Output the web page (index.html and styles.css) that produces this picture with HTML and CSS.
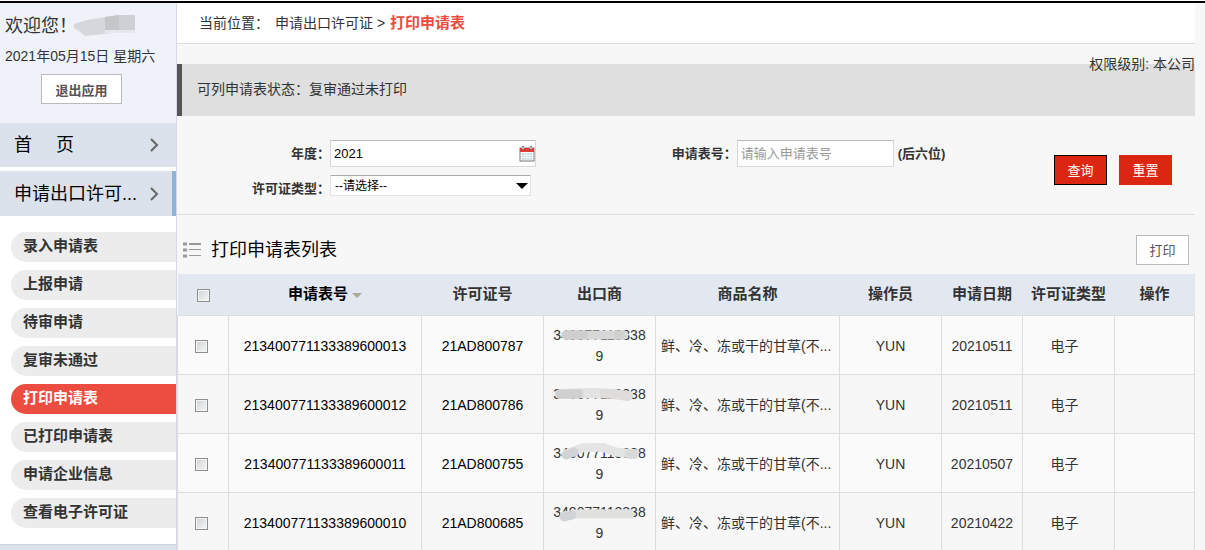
FILE: index.html
```
<!DOCTYPE html>
<html lang="zh-CN">
<head>
    <meta charset="UTF-8">
    <meta name="viewport" content="width=device-width, initial-scale=1.0">
    <title>打印申请表</title>
    <link rel="stylesheet" href="styles.css">
</head>
<body>
    <div class="layout">
        <aside class="sidebar">
            <div class="user">
                <div class="welcome">
                    <span>欢迎您！</span>
                    <svg class="mask" width="64" height="24" viewBox="0 0 64 24">
                        <path d="M1 10L14 6L32 3L46 1H62V16L48 16L40 19L12 22L6 17L1 14Z" fill="#d4d8dd"/>
                        <path d="M32 3L46 1V16H32Z" fill="#c4c7ca"/>
                        <path d="M46 1H62V16H46Z" fill="#cdd0d5"/>
                        <path d="M32 16H62V19H32Z" fill="#e4e8ed"/>
                    </svg>
                </div>
                <div class="date">2021年05月15日 星期六</div>
                <button class="btn btn-exit" type="button">退出应用</button>
            </div>
            <nav class="menu">
                <a class="menu-item" href="#">
                    <span class="menu-home"><span>首</span><span>页</span></span>
                    <svg class="chevron" width="10" height="14" viewBox="0 0 10 14"><path d="M2 1L8 7L2 13"/></svg>
                </a>
                <a class="menu-item current" href="#">
                    <span>申请出口许可...</span>
                    <svg class="chevron" width="10" height="14" viewBox="0 0 10 14"><path d="M2 1L8 7L2 13"/></svg>
                </a>
                <ul class="submenu">
                    <li><a href="#">录入申请表</a></li>
                    <li><a href="#">上报申请</a></li>
                    <li><a href="#">待审申请</a></li>
                    <li><a href="#">复审未通过</a></li>
                    <li><a class="active" href="#">打印申请表</a></li>
                    <li><a href="#">已打印申请表</a></li>
                    <li><a href="#">申请企业信息</a></li>
                    <li><a href="#">查看电子许可证</a></li>
                </ul>
            </nav>
            <div class="sidebar-rest"></div>
        </aside>

        <main class="main">
            <div class="breadcrumb">
                <span class="where">当前位置：</span>
                <span>申请出口许可证 &gt;</span>
                <strong>打印申请表</strong>
            </div>

            <div class="notice">
                可列申请表状态：复审通过未打印
                <span class="level">权限级别: 本公司</span>
            </div>

            <form class="search">
                <label for="year">年度：</label>
                <div class="field">
                    <div class="year-box">
                        <input id="year" type="text" value="2021">
                        <svg class="calendar" width="16" height="16" viewBox="0 0 16 16">
                            <rect x="1" y="2" width="14" height="13" fill="#fff" stroke="#777"/>
                            <rect x="1" y="2" width="14" height="4" fill="#e23a35"/>
                            <path d="M4 0V4M12 0V4" stroke="#777" stroke-width="2"/>
                            <path d="M4 1V3M12 1V3" stroke="#fff"/>
                            <rect x="3" y="7" width="10" height="7" fill="#c6d9da"/>
                            <path d="M3 9.500H13M3 11.500H13M5.500 7V14M8 7V14M10.500 7V14" stroke="#f4fafa"/>
                        </svg>
                    </div>
                </div>
                <label for="formNo">申请表号：</label>
                <div class="field">
                    <input id="formNo" class="form-no" type="text" placeholder="请输入申请表号">
                    <span class="hint">(后六位)</span>
                </div>
                <label for="type">许可证类型：</label>
                <div class="field select-field">
                    <div class="select-box">
                        <select id="type">
                            <option>--请选择--</option>
                        </select>
                        <svg class="arrow" width="12" height="6" viewBox="0 0 12 6"><path d="M0 0H12L6 6Z"/></svg>
                    </div>
                </div>
                <div class="search-actions">
                    <button class="btn-red focused" type="button">查询</button>
                    <button class="btn-red" type="button">重置</button>
                </div>
            </form>

            <div class="list-head">
                <svg class="list-icon" width="18" height="16" viewBox="0 0 18 16">
                    <path d="M0 2H4M0 8H4M0 14H4" stroke="#999" stroke-width="3"/>
                    <path d="M6 2H18" stroke="#999" stroke-width="2"/>
                    <path d="M6 7.500H18M6 13.500H18" stroke="#999"/>
                </svg>
                <h2>打印申请表列表</h2>
                <button class="btn btn-print" type="button">打印</button>
            </div>

            <table class="list">
                <colgroup>
                    <col class="c-check">
                    <col class="c-no">
                    <col class="c-license">
                    <col class="c-exporter">
                    <col>
                    <col class="c-operator">
                    <col class="c-date">
                    <col class="c-type">
                    <col class="c-action">
                </colgroup>
                <thead>
                    <tr>
                        <th><input type="checkbox" aria-label="全选"></th>
                        <th class="sorted">申请表号<svg class="sort" width="10" height="5" viewBox="0 0 10 5"><path d="M0 0H10L5 5Z"/></svg></th>
                        <th>许可证号</th>
                        <th>出口商</th>
                        <th>商品名称</th>
                        <th>操作员</th>
                        <th>申请日期</th>
                        <th>许可证类型</th>
                        <th>操作</th>
                    </tr>
                </thead>
                <tbody>
                    <tr>
                        <td class="check"><input type="checkbox" aria-label="选择 213400771133389600013"></td>
                        <td><a href="#">213400771133389600013</a></td>
                        <td><a href="#">21AD800787</a></td>
                        <td class="exporter">
                            340077113338<br>9
                            <svg class="smudge" width="96" height="24" viewBox="0 0 96 24">
                                <path d="M14 10H72" stroke="#d8d8d8" stroke-width="9" stroke-linecap="round"/>
                                <path d="M14 10H32" stroke="#cecfd1" stroke-width="9" stroke-linecap="round"/>
                                <path d="M62 10H73" stroke="#d3d1cf" stroke-width="9"/>
                            </svg>
                        </td>
                        <td class="goods">鲜、冷、冻或干的甘草(不...</td>
                        <td>YUN</td>
                        <td>20210511</td>
                        <td class="type">电子</td>
                        <td></td>
                    </tr>
                    <tr>
                        <td class="check"><input type="checkbox" aria-label="选择 213400771133389600012"></td>
                        <td><a href="#">213400771133389600012</a></td>
                        <td><a href="#">21AD800786</a></td>
                        <td class="exporter">
                            340077113338<br>9
                            <svg class="smudge" width="96" height="24" viewBox="0 0 96 24">
                                <path d="M8 10L40 9L62 10L76 12" fill="none" stroke="#dedddc" stroke-width="10" stroke-linecap="round"/>
                                <path d="M8 10H26" stroke="#cfcfcf" stroke-width="9" stroke-linecap="round"/>
                                <path d="M32 9H48" stroke="#e3e3e3" stroke-width="10"/>
                            </svg>
                        </td>
                        <td class="goods">鲜、冷、冻或干的甘草(不...</td>
                        <td>YUN</td>
                        <td>20210511</td>
                        <td class="type">电子</td>
                        <td></td>
                    </tr>
                    <tr>
                        <td class="check"><input type="checkbox" aria-label="选择 213400771133389600011"></td>
                        <td><a href="#">213400771133389600011</a></td>
                        <td><a href="#">21AD800755</a></td>
                        <td class="exporter">
                            340077113338<br>9
                            <svg class="smudge" width="96" height="24" viewBox="0 0 96 24">
                                <path d="M14 11L30 5L50 4L64 9L82 11" fill="none" stroke="#e3e4e4" stroke-width="9" stroke-linecap="round"/>
                                <path d="M14 12L22 9" stroke="#d2d3d5" stroke-width="9" stroke-linecap="round"/>
                                <path d="M78 11H82" stroke="#d8dada" stroke-width="10" stroke-linecap="round"/>
                            </svg>
                        </td>
                        <td class="goods">鲜、冷、冻或干的甘草(不...</td>
                        <td>YUN</td>
                        <td>20210507</td>
                        <td class="type">电子</td>
                        <td></td>
                    </tr>
                    <tr>
                        <td class="check"><input type="checkbox" aria-label="选择 213400771133389600010"></td>
                        <td><a href="#">213400771133389600010</a></td>
                        <td><a href="#">21AD800685</a></td>
                        <td class="exporter">
                            340077113338<br>9
                            <svg class="smudge" width="96" height="24" viewBox="0 0 96 24">
                                <path d="M12 14L24 12H78" fill="none" stroke="#e0e0df" stroke-width="9" stroke-linecap="round"/>
                                <path d="M12 15L20 13" stroke="#d2d3d5" stroke-width="9" stroke-linecap="round"/>
                            </svg>
                        </td>
                        <td class="goods">鲜、冷、冻或干的甘草(不...</td>
                        <td>YUN</td>
                        <td>20210422</td>
                        <td class="type">电子</td>
                        <td></td>
                    </tr>
                </tbody>
            </table>
        </main>
    </div>
</body>
</html>
```
FILE: styles.css
```
* {
    margin: 0;
    padding: 0;
    box-sizing: border-box;
}

html {
    scrollbar-width: none;
    background: #f7f7f7;
}

body {
    border-top: 1px solid #fff;
    color: #333;
    font-family: "Liberation Sans", "Noto Sans CJK SC", sans-serif;
    font-size: 14px;
    line-height: 20px;
}

a {
    color: inherit;
    text-decoration: none;
}

button,
input,
select {
    font-family: inherit;
    font-size: 13px;
}

.layout {
    display: flex;
    min-height: 100vh;
    border-top: 2px solid #000;
}

/* sidebar */
.sidebar {
    width: 177px;
    flex-shrink: 0;
    display: flex;
    flex-direction: column;
    background: #fff;
    border-right: 1px solid #d3d9e6;
}

.user {
    height: 120px;
    padding: 11px 5px;
    background: #eff3f9;
}

.welcome {
    display: flex;
    align-items: center;
    height: 24px;
    font-size: 18px;
}

.welcome span {
    width: 68px;
    white-space: nowrap;
}

.mask {
    flex-shrink: 0;
}

.date {
    margin-top: 8px;
    white-space: nowrap;
}

.btn {
    height: 30px;
    background: #fff;
    border: 1px solid #bbb;
    color: #555;
}

.btn-exit {
    display: block;
    width: 81px;
    margin: 8px 0 0 36px;
    font-weight: bold;
}

.menu-item {
    display: flex;
    align-items: center;
    justify-content: space-between;
    height: 44px;
    padding: 0 17px 0 14px;
    background: #dce2ec;
    color: #000;
    font-size: 18px;
    white-space: nowrap;
}

.menu-item.current {
    height: 45px;
    margin-top: 4px;
    padding-right: 13px;
    border-right: 4px solid #8fb3d6;
}

.menu-home {
    display: flex;
    gap: 24px;
}

.chevron {
    fill: none;
    stroke: #666;
    stroke-width: 2;
}

.submenu {
    display: flex;
    flex-direction: column;
    gap: 8px;
    padding: 16px 0 16px 11px;
    list-style: none;
}

.submenu a {
    display: block;
    height: 30px;
    padding-left: 12px;
    border-radius: 15px 0 0 15px;
    background: #ececec;
    font-size: 15px;
    font-weight: bold;
    line-height: 28px;
}

.submenu a.active {
    background: #ed4c40;
    color: #fff;
}

.sidebar-rest {
    flex: 1;
    background: #dce2ec;
    border-top: 1px solid #d0d4da;
}

/* main area */
.main {
    flex: 1;
    min-width: 0;
    padding-right: 10px;
}

.breadcrumb {
    display: flex;
    align-items: center;
    height: 41px;
    padding-left: 22px;
    background: #fff;
    border-bottom: 1px solid #ddd;
}

.breadcrumb .where {
    width: 76px;
}

.breadcrumb strong {
    margin-left: 5px;
    color: #ed4c40;
    font-size: 15px;
}

.notice {
    position: relative;
    height: 52px;
    margin-top: 20px;
    padding-left: 15px;
    border-left: 5px solid #555;
    background: #dfdfdf;
    line-height: 50px;
}

.level {
    position: absolute;
    top: -10px;
    right: 0;
    line-height: 20px;
}

.search {
    display: grid;
    grid-template-columns: 153px 14fr auto 13fr auto;
    grid-template-rows: 27px 28px;
    row-gap: 8px;
    align-items: center;
    padding: 24px 23px 11px 0;
    border-bottom: 1px solid #ddd;
}

.search label,
.hint {
    font-size: 13px;
    font-weight: bold;
    text-align: right;
    white-space: nowrap;
}

.field {
    display: flex;
    align-items: center;
    gap: 4px;
}

.search input {
    height: 27px;
    padding: 0 3px;
    background: #fff;
    border: 1px solid #d9d9d9;
    border-top-color: #bbb;
    color: #000;
}

.search input::placeholder {
    color: #999;
}

.year-box,
.select-box {
    position: relative;
    display: flex;
}

#year {
    width: 206px;
}

.calendar {
    position: absolute;
    top: 6px;
    right: 1px;
}

.form-no {
    width: 157px;
}

.select-field {
    align-self: start;
}

.select-box select {
    width: 201px;
    height: 21px;
    padding: 0 4px;
    appearance: none;
    background: #fff;
    border: 1px solid #dfe2e8;
    border-top-color: #aaa;
    border-radius: 0;
    color: #000;
    font-size: 12px;
}

.arrow {
    position: absolute;
    top: 8px;
    right: 3px;
    fill: #000;
    pointer-events: none;
}

.search-actions {
    grid-column: 5;
    grid-row: 1 / 3;
    display: flex;
    gap: 12px;
    padding-bottom: 4px;
}

.btn-red {
    width: 53px;
    height: 30px;
    background: #db2711;
    border: 1px solid #db2711;
    color: #fff;
}

.btn-red.focused {
    border-color: #000;
}

.list-head {
    display: flex;
    align-items: center;
    height: 59px;
    padding: 10px 6px 0;
}

.list-head h2 {
    flex: 1;
    margin-left: 10px;
    color: #000;
    font-size: 18px;
    font-weight: normal;
}

.btn-print {
    width: 53px;
}

/* table */
.list {
    width: 100%;
    table-layout: fixed;
    border-collapse: collapse;
    text-align: center;
}

.c-check {
    width: 51px;
}

.c-no {
    width: 193px;
}

.c-license {
    width: 122px;
}

.c-exporter {
    width: 112px;
}

.c-operator {
    width: 102px;
}

.c-date {
    width: 81px;
}

.c-type {
    width: 92px;
}

.c-action {
    width: 80px;
}

.list th {
    height: 41px;
    background: #e3e8f0;
    font-size: 15px;
    white-space: nowrap;
}

.list th.sorted {
    color: #000;
}

.list td {
    height: 59px;
    padding-top: 2px;
    border: 1px solid #ddd;
}

.list tbody tr:nth-child(odd) {
    background: #fafafa;
}

.list td a {
    color: #000;
}

.list .check {
    padding-right: 4px;
}

.list .type {
    padding-right: 8px;
}

.list .exporter {
    position: relative;
    line-height: 21px;
}

.smudge {
    position: absolute;
    top: 9px;
    left: 8px;
}

.list .goods {
    padding-left: 5px;
    text-align: left;
    white-space: nowrap;
    overflow: hidden;
}

.list input {
    display: inline-block;
    width: 13px;
    height: 13px;
    appearance: none;
    background: linear-gradient(135deg, #cfd3d7, #f6f6f6);
    border: 1px solid #8e8f8f;
    box-shadow: inset 0 0 0 1px #f4f4f4;
    vertical-align: middle;
}

.sort {
    margin-left: 4px;
    fill: #aaa896;
    vertical-align: middle;
}
```
